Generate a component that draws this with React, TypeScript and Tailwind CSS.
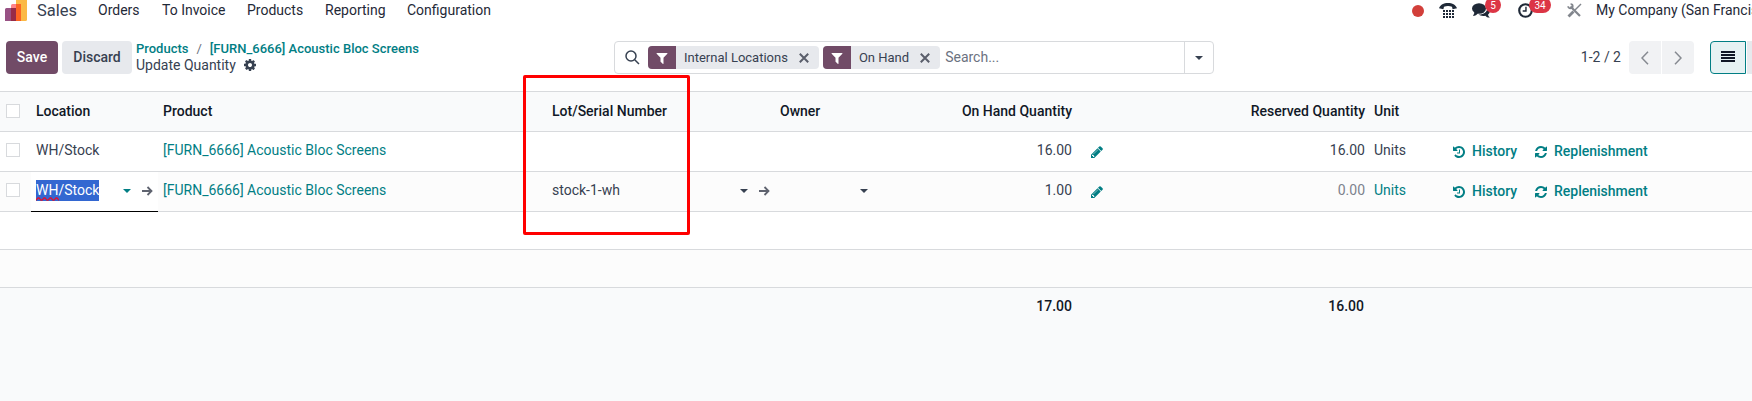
import { ReactNode } from "react";
import clsx from "clsx";

const FILTER =
  "M1595 295q17 41-14 70l-493 493v742q0 42-39 59-13 5-25 5-27 0-45-19l-256-256q-19-19-19-45v-486l-493-493q-31-29-14-70 17-39 59-39h1280q42 0 59 39z";
const PENCIL =
  "M491 1536l91-91-235-235-91 91v107h128v128h107zm523-928q0-22-22-22-10 0-17 7l-542 542q-7 7-7 17 0 22 22 22 10 0 17-7l542-542q7-7 7-17zm-54-192l416 416-832 832h-416v-416zm683 96q0 53-37 90l-166 166-416-416 166-165q36-38 90-38 53 0 91 38l235 234q37 39 37 91z";
const REFRESH =
  "M1639 1056q0 5-1 7-64 268-268 434.5t-478 166.5q-146 0-282.5-55t-243.5-157l-129 129q-19 19-45 19t-45-19-19-45v-448q0-26 19-45t45-19h448q26 0 45 19t19 45-19 45l-137 137q71 66 161 102t187 36q134 0 250-65t186-179q11-17 53-117 8-23 30-23h192q13 0 22.5 9.5t9.5 22.5zm25-800v448q0 26-19 45t-45 19h-448q-26 0-45-19t-19-45 19-45l138-138q-148-137-349-137-134 0-250 65t-186 179q-11 17-53 117-8 23-30 23h-199q-13 0-22.5-9.5t-9.5-22.5v-7q65-268 270-434.5t480-166.5q146 0 284 55.5t245 156.5l130-129q19-19 45-19t45 19 19 45z";
const HISTORY =
  "M1664 896q0 156-61 298t-164 245-245 164-298 61q-172 0-327-72.5t-264-204.5q-7-10-6.5-22.5t8.5-20.5l137-138q10-9 25-9 16 2 23 12 73 95 179 147t225 52q104 0 198.5-40.5t163.5-109.5 109.5-163.5 40.5-198.5-40.5-198.5-109.5-163.5-163.5-109.5-198.5-40.5q-98 0-188 35.5t-160 101.5l137 138q31 30 14 69-17 40-59 40h-448q-26 0-45-19t-19-45v-448q0-42 40-59 39-17 69 14l130 129q107-101 244.5-156.5t284.5-55.5q156 0 298 61t245 164 164 245 61 298zm-640-288v448q0 14-9 23t-23 9h-320q-14 0-23-9t-9-23v-64q0-14 9-23t23-9h224v-352q0-14 9-23t23-9h64q14 0 23 9t9 23z";
const COG =
  "M1152 896q0-106-75-181t-181-75-181 75-75 181 75 181 181 75 181-75 75-181zm512-109v222q0 12-8 23t-20 13l-185 28q-19 54-39 91 35 50 107 138 10 12 10 25t-9 23q-27 37-99 108t-94 71q-12 0-26-9l-138-108q-44 23-91 38-16 136-29 186-7 28-36 28h-222q-14 0-24.5-8.5t-11.5-21.5l-28-184q-49-16-90-37l-141 107q-10 9-25 9-14 0-25-11-126-114-165-168-7-10-7-23 0-12 8-23 15-21 51-66.5t54-70.5q-27-50-41-99l-183-27q-13-2-21-12.5t-8-23.5v-222q0-12 8-23t19-13l186-28q14-46 39-92-40-57-107-138-10-12-10-24 0-10 9-23 26-36 98.5-107.5t94.5-71.5q13 0 26 10l138 107q44-23 91-38 16-136 29-186 7-28 36-28h222q14 0 24.5 8.5t11.5 21.5l28 184q49 16 90 37l142-107q9-9 24-9 13 0 25 10 129 119 165 170 7 8 7 22 0 12-8 23-15 21-51 66.5t-54 70.5q26 50 41 98l183 28q13 2 21 12.5t8 23.5z";

const Icon = ({ d, className }: { d: string; className?: string }) => (
  <svg viewBox="0 0 1792 1792" fill="currentColor" className={clsx("shrink-0", className)}>
    <path d={d} />
  </svg>
);

const Caret = ({ className }: { className?: string }) => (
  <svg viewBox="0 0 8 4" fill="currentColor" className={clsx("h-1 w-2 shrink-0", className)}>
    <path d="M0 0h8L4 4z" />
  </svg>
);

const Arrow = () => (
  <svg viewBox="0 0 11 10" fill="none" stroke="#5f636f" strokeWidth="1.8" className="h-2.5 w-[11px] shrink-0">
    <path d="M0 5h9.5M5.5 1l4 4-4 4" />
  </svg>
);

const Logo = () => (
  <svg viewBox="0 0 22 21" className="h-[21px] w-[22px] shrink-0">
    <path d="M13 0h9v19.500a1.500 1.500 0 0 1-1.500 1.500H11V0z" fill="#fbb945" />
    <path d="M6 5.500A1.500 1.500 0 0 1 7.500 4H16v17H6z" fill="#ff8288" />
    <path d="M11 4h5v17h-5z" fill="#fc6423" />
    <path d="M0 9.500A1.500 1.500 0 0 1 1.500 8H11v13H0z" fill="#985184" />
    <path d="M6 8h5v13H6z" fill="#962b48" />
  </svg>
);

const Facet = ({ label }: { label: string }) => (
  <div className="mr-1 flex h-[23px] items-center overflow-hidden rounded bg-[#e7e9ed] text-[13px] text-[#374151]">
    <span className="flex h-full w-7 items-center justify-center bg-[#714b67] text-white">
      <Icon d={FILTER} className="size-[14px]" />
    </span>
    <span className="ml-2 whitespace-nowrap">{label}</span>
    <svg viewBox="0 0 10 10" stroke="#5a5e6b" strokeWidth="2" className="mr-[10px] ml-[11px] size-[10px]">
      <path d="M.8.8l8.400 8.400M9.200.8L.8 9.200" />
    </svg>
  </div>
);

const Badge = ({ children, className }: { children: ReactNode; className?: string }) => (
  <span
    className={clsx(
      "absolute -top-[3px] flex h-4 items-center justify-center rounded-full bg-[#dc3545] text-[10px] text-white",
      className,
    )}
  >
    {children}
  </span>
);

const Navbar = () => (
  <header className="flex h-[21px] items-center pl-[5px] whitespace-nowrap text-[#1f2937]">
    <Logo />
    <span className="ml-[10px] w-[61px] text-[16.5px] text-[#374151]">Sales</span>
    <nav className="flex">
      <a className="w-16">Orders</a>
      <a className="w-[85px]">To Invoice</a>
      <a className="w-[78px]">Products</a>
      <a className="w-[82px]">Reporting</a>
      <a>Configuration</a>
    </nav>
    <div className="ml-auto flex h-[21px] w-[340px] shrink-0 items-center">
      <span className="size-3 shrink-0 rounded-full bg-[#d23f3a]" />
      <svg viewBox="0 0 18 16" fill="currentColor" className="ml-[15px] h-4 w-[18px] shrink-0">
        <path d="M0 5.200C1.200 1.700 4.800 0 9 0s7.800 1.700 9 5.200l-4.400 1-.6-2.500C10.500 2.700 7.500 2.700 5 3.700l-.6 2.500z" />
        <path d="M4 7h2v2H4zM7 7h2v2H7zM10 7h2v2h-2zM13 7h2v2h-2zM4 10h2v2H4zM7 10h2v2H7zM10 10h2v2h-2zM13 10h2v2h-2zM4 13h2v2H4zM7 13h2v2H7zM10 13h2v2h-2zM13 13h2v2h-2z" />
      </svg>
      <div className="relative ml-[15px] flex h-[21px] w-[46px] shrink-0 items-center">
        <svg viewBox="0 0 18 15" fill="currentColor" className="h-[15px] w-[18px]">
          <ellipse cx="7" cy="5.500" rx="7" ry="5.200" />
          <path d="M3 8.500L1 13c2 0 4-1.200 5-3zM15.400 4.500c3 2 3.400 5 .6 7.200.2 1.200 1 2 2 2.800-2 .2-3.500-.4-4.700-1.800-3 .5-5.300-.1-6.800-1.200 5 .2 9-2.500 8.900-7z" />
        </svg>
        <Badge className="left-[13px] w-4">5</Badge>
      </div>
      <div className="relative flex h-[21px] w-[49px] shrink-0 items-center">
        <svg viewBox="0 0 16 16" fill="none" stroke="currentColor" strokeWidth="2.300" className="size-[15px]">
          <circle cx="8" cy="8" r="6.700" />
          <path d="M8.500 4v4.500H5" strokeWidth="1.500" />
        </svg>
        <Badge className="left-[11px] w-[22px]">34</Badge>
      </div>
      <svg viewBox="0 0 15 15" fill="none" stroke="#82868d" className="mr-[14px] size-[15px] shrink-0">
        <path d="M3.500 3.500l9.500 9.500" strokeWidth="2.200" />
        <path d="M1.200 3.200a2 2 0 0 0 2.600 2A2 2 0 0 0 3.600 1.200" strokeWidth="1.800" />
        <path d="M14 1L8 7" strokeWidth="1.500" />
        <path d="M6.500 8.500L1.500 13.500" strokeWidth="2.800" />
      </svg>
      <span>My Company (San Francisco)</span>
    </div>
  </header>
);

const PagerButton = ({ d, className }: { d: string; className: string }) => (
  <button className={clsx("flex h-[33px] w-8 items-center justify-center bg-[#f1f2f4]", className)}>
    <svg viewBox="0 0 8 14" fill="none" stroke="#868a91" strokeWidth="1.500" className="h-[14px] w-2">
      <path d={d} />
    </svg>
  </button>
);

const ControlPanel = () => (
  <div className="flex h-[70px] pt-5 pl-1.5">
    <button className="h-[33px] w-[52px] rounded bg-[#714b67] font-medium text-white">Save</button>
    <button className="ml-1 h-[33px] w-[70px] rounded bg-[#e7e9ed] font-medium text-[#374151]">Discard</button>
    <div className="ml-1 w-[478px] whitespace-nowrap text-[#374151]">
      <div className="flex h-4 items-center pb-0.5 text-[13px] font-medium text-[#017e84]">
        Products <span className="mx-2 font-normal text-[#6b7280]">/</span> [FURN_6666] Acoustic Bloc Screens
      </div>
      <div className="flex h-4 items-center">
        Update Quantity <Icon d={COG} className="ml-[7px] size-[14px]" />
      </div>
    </div>
    <div className="flex h-[33px] w-[600px] items-center rounded border border-[#d8dadd] pl-[10px]">
      <svg viewBox="0 0 15 15" fill="none" stroke="#374151" strokeWidth="1.500" className="mr-2 size-[15px]">
        <circle cx="6" cy="6" r="5" />
        <path d="M9.700 9.700l4.300 4.300" />
      </svg>
      <Facet label="Internal Locations" />
      <Facet label="On Hand" />
      <span className="ml-px text-[#6b7280]">Search...</span>
      <span className="ml-auto flex h-full w-[29px] items-center justify-center border-l border-[#d8dadd]">
        <Caret />
      </span>
    </div>
    <span className="ml-auto pt-1.5">1-2 / 2</span>
    <div className="ml-2 flex gap-px">
      <PagerButton d="M7 .8L1 7l6 6.200" className="rounded-l" />
      <PagerButton d="M1 .8L7 7l-6 6.200" className="rounded-r" />
    </div>
    <button className="ml-4 flex h-[33px] w-9 items-center justify-center rounded-l border border-[#017e84] bg-[#e6f2f3]">
      <svg viewBox="0 0 14 11" fill="#111827" className="-mt-0.5 h-[11px] w-[14px]">
        <path d="M0 0h14v2H0zM0 3h14v2H0zM0 6h14v2H0zM0 9h14v2H0z" />
      </svg>
    </button>
    <span className="ml-px h-[33px] w-[5px] bg-[#e7e9ed]" />
  </div>
);

const GRID = "grid grid-cols-[31px_127px_389px_228px_127px_177px_292px_78px_303px] border-[#d8dadd]";

const Checkbox = () => (
  <span className="mb-px flex items-center pl-1.5">
    <span className="size-[14px] border border-[#d8dadd] bg-white" />
  </span>
);

const Actions = () => (
  <span className="flex items-center pt-0.5 pl-[3px] font-medium text-[#017e84]">
    <Icon d={HISTORY} className="size-[14px]" />
    <span className="ml-1.5 w-[62px]">History</span>
    <Icon d={REFRESH} className="size-[14px]" />
    <span className="ml-1.5">Replenishment</span>
  </span>
);

const Quantity = ({ value }: { value: string }) => (
  <span className="-mr-[25px] flex items-center justify-end">
    {value}
    <Icon d={PENCIL} className="mt-0.5 ml-[18px] size-[14px] text-[#017e84]" />
  </span>
);

export default function App() {
  return (
    <div className="relative h-[401px] w-[1752px] overflow-hidden bg-white font-[Roboto,sans-serif] text-[14px] leading-[21px] text-[#374151]">
      <Navbar />
      <ControlPanel />

      <div className={clsx(GRID, "h-[41px] items-center border-y bg-[#f9fafb] font-medium text-[#111827]")}>
        <Checkbox />
        <span className="pl-[5px]">Location</span>
        <span className="pl-[5px]">Product</span>
        <span className="pl-[5px]">Lot/Serial Number</span>
        <span className="pl-[5px]">Owner</span>
        <span className="-mr-[7px] pr-[14px] text-right">On Hand Quantity</span>
        <span className="pr-[6px] text-right">Reserved Quantity</span>
        <span className="pl-[3px]">Unit</span>
      </div>

      <div className={clsx(GRID, "h-10 items-center border-b pb-0.5")}>
        <Checkbox />
        <span className="pl-[5px]">WH/Stock</span>
        <span className="pl-[5px] text-[#017e84]">[FURN_6666] Acoustic Bloc Screens</span>
        <span />
        <span />
        <Quantity value="16.00" />
        <span className="pr-[6px] text-right">16.00</span>
        <span className="pl-[3px]">Units</span>
        <Actions />
      </div>

      <div className={clsx(GRID, "h-10 items-center border-b bg-[#fcfcfc] pb-0.5")}>
        <Checkbox />
        <div className="-mb-[3px] flex items-center self-stretch border-b border-black bg-white px-[5px] pb-0.5">
          <span className="relative bg-[#3367d1] text-white">
            WH/Stock
            <svg viewBox="0 0 23 4" fill="none" stroke="#e01030" strokeWidth="1.3" className="absolute bottom-0 left-0 h-1 w-[23px]">
              <path d="M0 3.200l2-2.200h1l2 2.200h1L8 1h1l2 2.200h1L14 1h1l2 2.200h1L20 1h1l2 2.200" />
            </svg>
          </span>
          <Caret className="mt-px mr-[11px] ml-auto text-[#017e84]" />
          <Arrow />
        </div>
        <span className="pl-[5px] text-[#017e84]">[FURN_6666] Acoustic Bloc Screens</span>
        <div className="flex items-center pr-[5px] pl-[5px]">
          <span>stock-1-wh</span>
          <Caret className="mt-px mr-[11px] ml-auto" />
          <Arrow />
        </div>
        <div className="flex items-center justify-end pr-[34px]">
          <Caret className="mt-px" />
        </div>
        <Quantity value="1.00" />
        <span className="pr-[6px] text-right text-[#7c828d]">0.00</span>
        <span className="pl-[3px] text-[#017e84]">Units</span>
        <Actions />
      </div>

      <div className="h-[38px] border-b border-[#d8dadd]" />
      <div className="h-[38px] border-b border-[#d8dadd] bg-[#fcfcfc]" />

      <div className={clsx(GRID, "h-[113px] bg-[#f9fafb] pt-2 font-medium text-[#111827]")}>
        <span className="col-start-6 -mr-[7px] pr-[14px] text-right">17.00</span>
        <span className="pr-[7px] text-right">16.00</span>
      </div>

      {/* highlight around the lot column */}
      <div className="absolute top-[75px] left-[523px] h-[160px] w-[167px] rounded-[2px] border-[3px] border-[#ff0000]" />
    </div>
  );
}
